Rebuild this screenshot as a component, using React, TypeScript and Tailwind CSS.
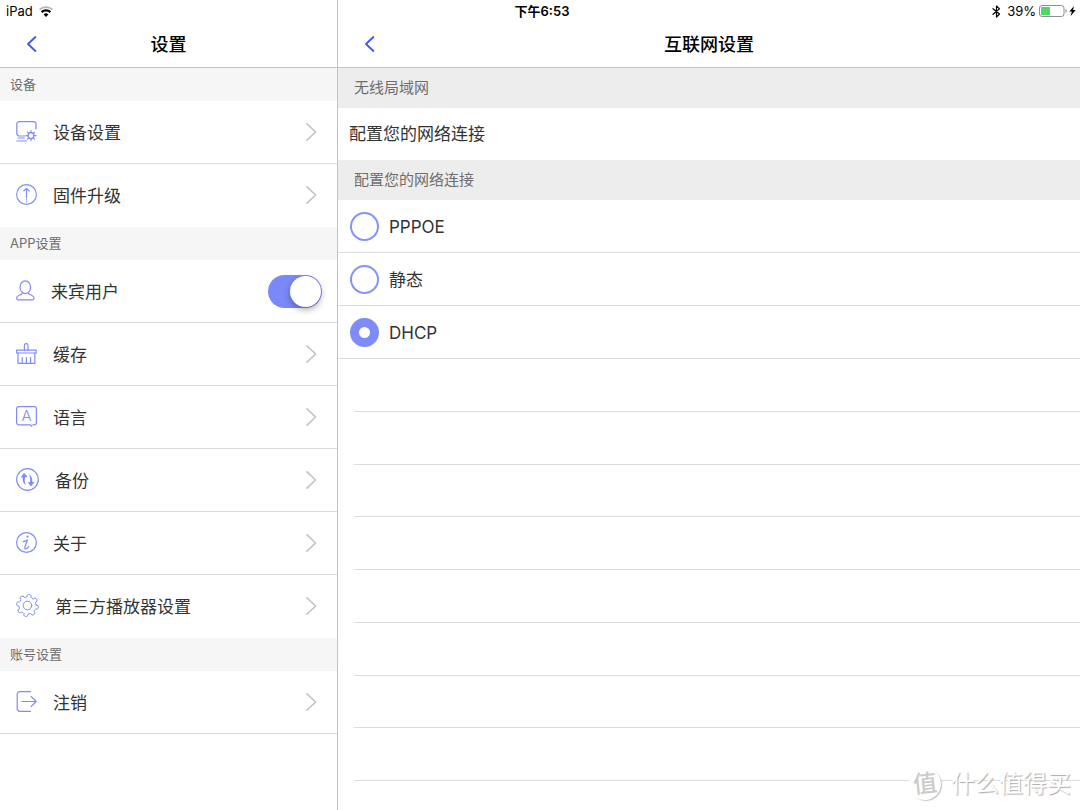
import React, { useState } from 'react';
import clsx from 'clsx';

type IconProps = { className?: string };

const stroke = {
  fill: 'none',
  stroke: 'currentColor',
  strokeLinecap: 'round' as const,
  strokeLinejoin: 'round' as const,
  'aria-hidden': true,
};

// point on a circle, angle in degrees
const polar = (c: number, r: number, deg: number) => {
  const a = (deg * Math.PI) / 180;
  return `${(c + r * Math.cos(a)).toFixed(2)} ${(c + r * Math.sin(a)).toFixed(2)}`;
};

const gearPath = (() => {
  let d = '';
  for (let i = 0; i < 8; i++) {
    const a = i * 45 + 10;
    d += `${i === 0 ? 'M' : 'L'}${polar(11.5, 8.8, a - 13)}`;
    d += `Q${polar(11.5, 11, a - 12)} ${polar(11.5, 11, a - 5)}`;
    d += `L${polar(11.5, 11, a + 5)}`;
    d += `Q${polar(11.5, 11, a + 12)} ${polar(11.5, 8.8, a + 13)}`;
    d += `Q${polar(11.5, 8, a + 22.5)} ${polar(11.5, 8.8, a + 32)}`;
  }
  return d + 'Z';
})();

const DeviceIcon = () => (
  <svg width="21" height="21" viewBox="0 0 21 21" strokeWidth="1.2" {...stroke}>
    <path d="M20 8V3.2A2.6 2.6 0 0 0 17.400.6H3.400A2.600 2.600 0 0 0 .8 3.200v9.200A2.600 2.600 0 0 0 3.400 15h5.600" />
    <path d="M2.200 17h6M1 20h9.400" />
    <circle cx="15" cy="14.600" r="3" />
    <path d="M15 11.600V9.600M15 17.600v2M12 14.600h-2M18 14.600h2M12.900 12.500l-1.400-1.400M17.100 12.500l1.400-1.400M12.900 16.700l-1.400 1.400M17.100 16.700l1.400 1.400" />
  </svg>
);

const UpgradeIcon = () => (
  <svg width="21" height="21" viewBox="0 0 21 21" strokeWidth="1.1" {...stroke}>
    <circle cx="10.500" cy="10.500" r="9.900" />
    <path d="M10.500 4.400v9.400M10.500 15.400v.6M10.500 17.600v.1M7.800 7l2.700-2.700L13.200 7" />
  </svg>
);

const GuestIcon = () => (
  <svg width="19" height="21" viewBox="0 0 19 21" strokeWidth="1.2" {...stroke}>
    <ellipse cx="9.300" cy="7.200" rx="5.300" ry="6.400" />
    <path d="M6.300 13.200c-.5 1.200-1.800 1.500-3.200 2C1.500 15.800.6 16.800.6 18.300c0 1 .6 1.500 1.600 1.500h14.300c1 0 1.600-.5 1.600-1.500 0-1.500-.9-2.500-2.500-3.100-1.400-.5-2.700-.8-3.200-2" />
  </svg>
);

const CacheIcon = () => (
  <svg width="21" height="21" viewBox="0 0 21 21" strokeWidth="1.2" {...stroke}>
    <path d="M8.400 7.200V2.400C8.400 1.300 9.200.6 10.200.6s1.800.7 1.800 1.800v4.800" />
    <rect x=".6" y="7.200" width="19.600" height="2.800" />
    <path d="M2 10v10.400h16.800V10M6.200 14.500v5.500M10.400 14.500v5.500M14.600 14.500v5.500" />
  </svg>
);

const LanguageIcon = () => (
  <svg width="21" height="21" viewBox="0 0 21 21" aria-hidden>
    <path
      d="M16.800 18.800h1.400a2.200 2.200 0 0 0 2.200-2.200V2.800A2.200 2.200 0 0 0 18.200.6H2.800A2.200 2.200 0 0 0 .6 2.800v13.800a2.200 2.200 0 0 0 2.200 2.200h11.400l1.600 1.500"
      strokeWidth="1.2"
      {...stroke}
    />
    <text x="10.500" y="14.800" textAnchor="middle" fill="currentColor" className="text-[15px] font-light">A</text>
  </svg>
);

const BackupIcon = () => (
  <svg width="23" height="23" viewBox="0 0 23 23" strokeWidth="1.2" {...stroke}>
    <circle cx="11.500" cy="11.500" r="10.800" />
    <path d="M10 17.600C6.800 15 6 11.800 7 8.200l2.200.300c-.8 3.200-.5 6.200.8 9.100z" fill="currentColor" stroke="none" />
    <path d="M4.700 9.600 8.200 4.800l3.300 4.200z" fill="currentColor" stroke="none" />
    <path d="M13 6.200c3.200 2.400 4 5.700 3 9.300l-2.200-.3c.8-3.200.5-6.100-.8-9z" fill="currentColor" stroke="none" />
    <path d="m11.600 14.300 3.400 4.300 3.500-4.600z" fill="currentColor" stroke="none" />
  </svg>
);

const AboutIcon = () => (
  <svg width="21" height="21" viewBox="0 0 21 21" strokeWidth="1.2" {...stroke}>
    <circle cx="10.500" cy="10.500" r="9.900" />
    <circle cx="11.500" cy="4.600" r=".5" fill="currentColor" />
    <path d="M7.200 9.600c1.600-.2 2.900-.9 4.100-1.600-.8 2.800-2.200 5.400-2.500 7.700-.2 2 2.300 1.100 4.100-1" />
  </svg>
);

const PlayerIcon = () => (
  <svg width="23" height="23" viewBox="0 0 23 23" strokeWidth="1" {...stroke}>
    <path d={gearPath} />
    <circle cx="11.500" cy="11.500" r="4.300" />
  </svg>
);

const LogoutIcon = () => (
  <svg width="21" height="21" viewBox="0 0 21 21" strokeWidth="1.2" {...stroke}>
    <path d="M14.500.6H4A2.800 2.800 0 0 0 1.200 3.400v14.200A2.800 2.800 0 0 0 4 20.400h10.500M5.800 10.500h14M15 5.300l5.200 5.200-5.200 5.200" />
  </svg>
);

const Chevron = () => (
  <svg width="11" height="18" viewBox="0 0 11 18" strokeWidth="1.6" className="mr-5 ml-auto text-[#c3c3c7]" {...stroke}>
    <path d="M1 .8 9.600 9 1 17.200" />
  </svg>
);

const BackIcon = ({ className }: IconProps) => (
  <svg width="10" height="16" viewBox="0 0 10 16" strokeWidth="1.8" className={className} {...stroke}>
    <path d="M8.400 1 1 8l7.400 7" />
  </svg>
);

type Item = { label: string; icon: () => React.ReactElement; toggle?: boolean };

const sections: { title: string; items: Item[] }[] = [
  {
    title: '设备',
    items: [
      { label: '设备设置', icon: DeviceIcon },
      { label: '固件升级', icon: UpgradeIcon },
    ],
  },
  {
    title: 'APP设置',
    items: [
      { label: '来宾用户', icon: GuestIcon, toggle: true },
      { label: '缓存', icon: CacheIcon },
      { label: '语言', icon: LanguageIcon },
      { label: '备份', icon: BackupIcon },
      { label: '关于', icon: AboutIcon },
      { label: '第三方播放器设置', icon: PlayerIcon },
    ],
  },
  {
    title: '账号设置',
    items: [{ label: '注销', icon: LogoutIcon }],
  },
];

const modes = ['PPPOE', '静态', 'DHCP'];

function StatusBar() {
  return (
    <div className="absolute inset-x-0 top-0 grid h-[22px] grid-cols-3 items-center text-[13px] leading-none text-black">
      <div className="flex items-center gap-[6px] pl-[6px]">
        <span>iPad</span>
        <svg width="14" height="11" viewBox="0 0 14 11" fill="none" aria-hidden>
          <path d="M.6 3.700a9.200 9.200 0 0 1 12.800 0" stroke="#b5b5b5" strokeWidth="1.800" />
          <path d="M2.600 6.100a6.400 6.400 0 0 1 8.800 0" stroke="#000" strokeWidth="2.200" />
          <path d="M7 11 4.600 8.500a3.500 3.500 0 0 1 4.800 0z" fill="#000" />
        </svg>
      </div>
      <div className="pl-1 text-center font-semibold">下午6:53</div>
      <div className="flex items-center justify-end pr-1">
        <svg width="9" height="13" viewBox="0 0 9 13" className="mr-[6px]" strokeWidth="1.2" {...stroke}>
          <path d="M1 3.700l6.500 5.300L4.500 12V1l3 2.900L1 9.300" />
        </svg>
        <span>39%</span>
        <svg width="29" height="12" viewBox="0 0 29 12" className="ml-[3px]" aria-hidden>
          <rect x=".5" y=".5" width="24.500" height="11" rx="2.500" fill="none" stroke="#8e8e8e" />
          <rect x="2" y="2" width="9" height="8" rx=".5" fill="#4cd964" />
          <path d="M26.500 4a2.200 2.200 0 0 1 0 4z" fill="#8e8e8e" />
        </svg>
        <svg width="7" height="10" viewBox="0 0 7 10" className="ml-px" fill="#000" aria-hidden>
          <path d="M5 0 .3 5.600h2.500L1.700 10l5-5.900H4z" />
        </svg>
      </div>
    </div>
  );
}

function NavBar({ title }: { title: string }) {
  return (
    <header className="grid h-[46px] grid-cols-[64px_1fr_64px] items-center border-b border-[#c4c4c6]">
      <button type="button" aria-label="返回" className="flex h-full items-center pb-0.5 pl-[27px] text-[#4353f0]">
        <BackIcon />
      </button>
      <h1 className="text-center text-lg font-medium text-black">{title}</h1>
    </header>
  );
}

function SidebarRow({ item, last }: { item: Item; last: boolean }) {
  const [on, setOn] = useState(true);
  const Icon = item.icon;
  const row = clsx('flex h-[63px] w-full items-center border-b pl-4 text-left', last ? 'border-transparent' : 'border-[#dcdcde]');
  const content = (
    <>
      <span className="pb-0.5 text-[#7f8bf8]"><Icon /></span>
      <span className="ml-4 pt-0.5 text-[17px] leading-6 text-[#333]">{item.label}</span>
    </>
  );

  if (item.toggle) {
    return (
      <label className={row}>
        {content}
        <input
          type="checkbox"
          role="switch"
          checked={on}
          onChange={(e) => setOn(e.target.checked)}
          className="mr-[15px] ml-auto flex h-[33px] w-[54px] appearance-none items-center rounded-full bg-[#d5d5da] px-px before:size-[31px] before:rounded-full before:bg-white before:shadow-[0_3px_6px_rgba(0,0,0,0.3)] checked:justify-end checked:bg-[#7b88f7]"
        />
      </label>
    );
  }

  return (
    <button type="button" className={row}>
      {content}
      <Chevron />
    </button>
  );
}

function Sidebar() {
  return (
    <aside className="w-[338px] shrink-0 border-r border-[#c4c4c6] pt-[22px]">
      <NavBar title="设置" />
      {sections.map((section, s) => (
        <section key={section.title}>
          <h2 className="flex h-[33px] items-center bg-[#f6f6f6] pl-[10px] text-[13px] text-[#6d6d6d]">{section.title}</h2>
          {section.items.map((item, i) => (
            <SidebarRow key={item.label} item={item} last={i === section.items.length - 1 && s < sections.length - 1} />
          ))}
        </section>
      ))}
    </aside>
  );
}

function Watermark() {
  return (
    <div className="pointer-events-none absolute right-[9px] bottom-[10px] flex items-center gap-[10px] text-white">
      <span className="flex size-8 -rotate-6 items-center justify-center rounded-full bg-white text-2xl font-medium text-[#cbcbcb] shadow-[1px_1px_1px_#c4c4c4]">
        值
      </span>
      <span className="text-2xl leading-8 [text-shadow:1px_1px_1px_#aaa]">什么值得买</span>
    </div>
  );
}

function NetworkPane() {
  const [mode, setMode] = useState('DHCP');
  return (
    <main className="flex min-w-0 flex-1 flex-col pt-[22px]">
      <NavBar title="互联网设置" />
      <h2 className="flex h-10 items-center bg-[#ededed] pl-4 text-[15px] text-[#6d6d6d]">无线局域网</h2>
      <p className="flex h-[52px] items-center pl-[11px] text-[17px] leading-6 text-[#333]">配置您的网络连接</p>
      <h2 className="flex h-10 items-center bg-[#ededed] pl-4 text-[15px] text-[#6d6d6d]">配置您的网络连接</h2>
      {modes.map((m) => (
        <label key={m} className="flex h-[53px] items-center gap-[10px] border-b border-[#dcdcde] pl-3 text-[17px] leading-6 text-[#333]">
          <input
            type="radio"
            name="mode"
            value={m}
            checked={mode === m}
            onChange={() => setMode(m)}
            className="size-[29px] appearance-none rounded-full border-2 border-[#8792fb] bg-white checked:border-[9px] checked:border-[#7f8bf8]"
          />
          <span className="pt-0.5">{m}</span>
        </label>
      ))}

      {/* empty table rows fill the rest of the pane */}
      <div className="flex flex-1 flex-col pb-[29px] pl-4">
        {Array.from({ length: 8 }, (_, i) => (
          <div key={i} className="min-h-12 flex-1 border-b border-[#dcdcde]" />
        ))}
      </div>
    </main>
  );
}

export default function App() {
  return (
    <div className="relative flex min-h-screen bg-white font-['Inter','Noto_Sans_CJK_SC',sans-serif]">
      <Sidebar />
      <NetworkPane />
      <StatusBar />
      <Watermark />
    </div>
  );
}
